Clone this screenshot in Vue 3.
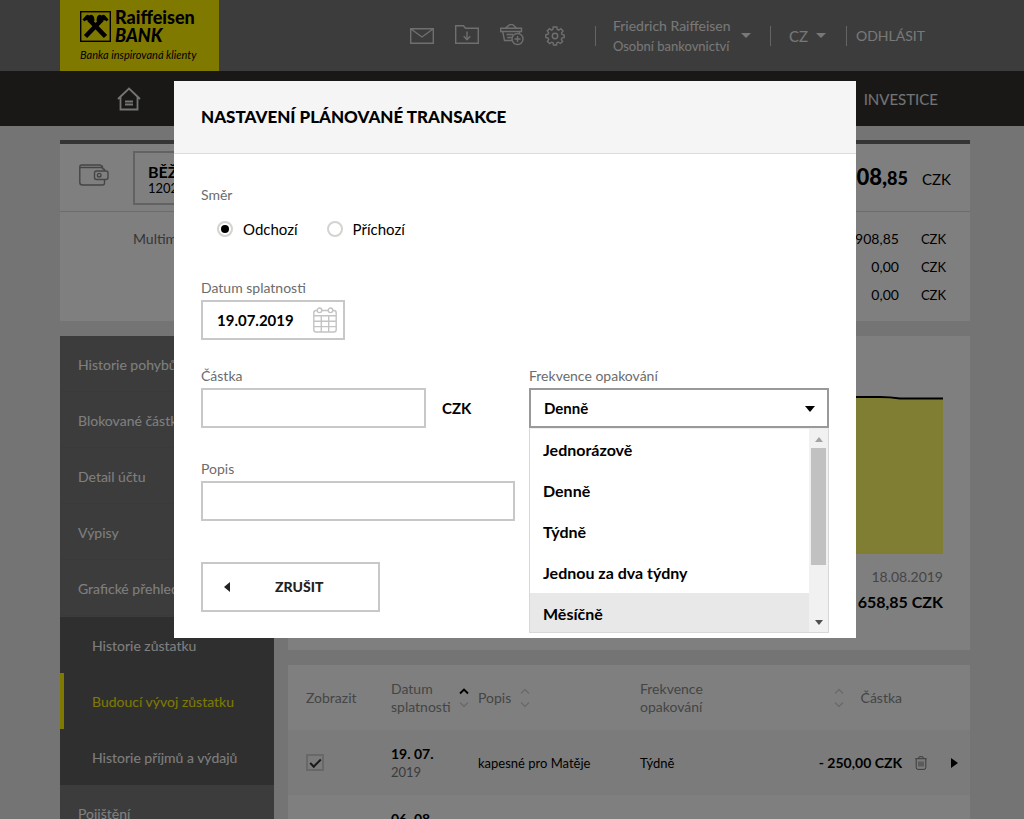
<script setup>
import { ref } from 'vue'

const menu = ['Historie pohybů', 'Blokované částky', 'Detail účtu', 'Výpisy', 'Grafické přehledy']
const submenu = [
  { label: 'Historie zůstatku', active: false },
  { label: 'Budoucí vývoj zůstatku', active: true },
  { label: 'Historie příjmů a výdajů', active: false }
]
const balances = ['908,85', '0,00', '0,00']
const options = ['Jednorázově', 'Denně', 'Týdně', 'Jednou za dva týdny', 'Měsíčně']

const direction = ref('out')
const date = ref('19.07.2019')
const amount = ref('')
const note = ref('')
const frequency = ref('Denně')
const highlighted = ref('Měsíčně')
const shown = ref(true)
</script>

<template>
  <div class="page">
    <header class="topbar">
      <div class="wrap topbar-in">
        <a href="#" class="logo" aria-label="Raiffeisen Bank">
          <span class="logo-row">
            <svg class="logo-mark" viewBox="0 0 31 31" aria-hidden="true">
              <rect x="0.7" y="0.7" width="29.6" height="29.6" fill="none" stroke="#000" stroke-width="1.4" />
              <path d="M5.5 25.5L22 8.5M25.500 25.500L9 8.500" stroke="#000" stroke-width="4.600" />
              <path d="M2.500 8.500L6 4.500Q7.500 2.800 9.200 4.500Q12 2.600 14 6L14.500 9.500L11 12.500L8 9.500Q5.500 8.500 4.500 10.500ZM28.500 8.500L25 4.500Q23.500 2.800 21.800 4.500Q19 2.600 17 6L16.500 9.500L20 12.500L23 9.500Q25.500 8.500 26.500 10.500Z" fill="#000" />
            </svg>
            <span class="logo-name"><span>Raiffeisen</span><i>BANK</i></span>
          </span>
          <span class="logo-claim">Banka inspirovaná klienty</span>
        </a>
        <nav class="tools">
          <a href="#" aria-label="Zprávy">
            <svg width="24" height="24" viewBox="0 0 24 24"><path d="M.7 4.700H23.300V19.300H.7ZM1 5L12 13L23 5" /></svg>
          </a>
          <a href="#" aria-label="Dokumenty">
            <svg width="24" height="24" viewBox="0 0 24 24"><path d="M.7 19.300V1.700H8.500L10.500 4.200H23.300V19.300ZM12 7.500V15.500M8.700 12.300L12 15.700L15.300 12.300" /></svg>
          </a>
          <a href="#" aria-label="Košík">
            <svg width="24" height="24" viewBox="0 0 24 24"><path d="M13 16.500H4.500L2.700 7.500M.7 4.200H21.500V7.500H.7ZM5.500 4L10 .5H12.500L16.500 4M19.800 7.500L19.300 9.500M6.500 10.500H13M7.200 13.500H11.500" /><circle cx="17.500" cy="15" r="5.500" /><path d="M17.500 12V18M14.500 15H20.500" /></svg>
          </a>
          <a href="#" aria-label="Nastavení">
            <svg width="20" height="24" viewBox="0 0 20 24"><circle cx="10" cy="12" r="2.700" /><path d="M8.200 3H11.800L12.300 5.500L13.800 6.100L15.900 4.700L18 7L16.500 9.200L17 10.500L19.200 11V13.500L16.900 14L16.300 15.400L17.600 17.500L15.300 19.500L13.300 18.200L12 18.700L11.500 21H8.500L8 18.700L6.700 18.200L4.700 19.500L2.400 17.400L3.700 15.400L3.100 14L.8 13.500V10.700L3.100 10.200L3.600 8.900L2.300 6.900L4.500 4.700L6.500 6.100L7.800 5.500Z" /></svg>
          </a>
        </nav>
        <button type="button" class="user">
          <span class="user-text">Friedrich Raiffeisen<small>Osobní bankovnictví</small></span>
          <span class="caret"></span>
        </button>
        <button type="button" class="lang">CZ<span class="caret"></span></button>
        <a href="#" class="logout">ODHLÁSIT</a>
      </div>
    </header>

    <nav class="mainnav">
      <div class="wrap mainnav-in">
        <a href="#" aria-label="Domů">
          <svg width="24" height="24" viewBox="0 0 24 24"><path d="M1 12L12 1.500L23 12M3.500 10V22.500H20.500V10M8 14.500H16M8 17.500H16" /></svg>
        </a>
        <a href="#">INVESTICE</a>
      </div>
    </nav>

    <main class="wrap">
      <section class="account">
        <div class="account-head">
          <svg class="wallet" width="30" height="24" viewBox="0 0 30 24"><path d="M25.500 7V5.500L23.500 4.500V2.500L21 1H2.500Q.8 1 .8 3V18.500Q.8 21 3.500 21H23.500Q25.500 21 25.500 19V15.500M.8 3.500H23.500M17.500 7H27Q29 7 29 9V13.500Q29 15.500 27 15.500H17.500Q15.500 15.500 15.500 13.500V9Q15.500 7 17.500 7Z" /><circle cx="20.200" cy="11.200" r="1.800" /></svg>
          <button type="button" class="account-pick"><b>BĚŽNÝ ÚČET</b>1202</button>
          <p class="total"><b>908,<small>85</small></b><span>CZK</span></p>
        </div>
        <div class="account-body">
          <span class="account-note">Multiměnový účet</span>
          <dl class="balances">
            <div v-for="(b, i) in balances" :key="i"><dt>{{ b }}</dt><dd>CZK</dd></div>
          </dl>
        </div>
      </section>

      <div class="columns">
        <nav class="side">
          <a v-for="m in menu" :key="m" href="#">{{ m }}</a>
          <div class="sub">
            <a v-for="s in submenu" :key="s.label" href="#" :class="{ active: s.active }">{{ s.label }}</a>
          </div>
          <a href="#">Pojištění</a>
        </nav>

        <div class="content">
          <section class="chart">
            <svg viewBox="0 0 628 160" preserveAspectRatio="none" aria-hidden="true">
              <path d="M0 2H570L585 3.500H628V160H0Z" fill="#fffc66" />
              <path d="M0 2H565Q575 2 585 3.500H628" fill="none" stroke="#000" stroke-width="2" />
            </svg>
            <p class="chart-date">18.08.2019</p>
            <p class="chart-sum">658,85 CZK</p>
          </section>

          <table class="plan">
            <colgroup>
              <col class="c-show" /><col class="c-date" /><col class="c-note" /><col /><col class="c-sum" /><col class="c-act" />
            </colgroup>
            <thead>
              <tr>
                <th scope="col">Zobrazit</th>
                <th scope="col">
                  <span class="sortable">Datum splatnosti
                    <svg class="sort" width="10" height="20" viewBox="0 0 10 20"><path class="on" d="M1 5.500L5 1.500L9 5.500" /><path d="M1 14.500L5 18.500L9 14.500" /></svg>
                  </span>
                </th>
                <th scope="col">
                  <span class="sortable start">Popis
                    <svg class="sort" width="10" height="20" viewBox="0 0 10 20"><path d="M1 5.500L5 1.500L9 5.500M1 14.500L5 18.500L9 14.500" /></svg>
                  </span>
                </th>
                <th scope="col">Frekvence<br />opakování</th>
                <th scope="col">
                  <span class="sortable end">
                    <svg class="sort" width="10" height="20" viewBox="0 0 10 20"><path d="M1 5.500L5 1.500L9 5.500M1 14.500L5 18.500L9 14.500" /></svg>
                    Částka
                  </span>
                </th>
                <td></td>
              </tr>
            </thead>
            <tbody>
              <tr class="alt">
                <td><input v-model="shown" type="checkbox" class="tick" aria-label="Zobrazit" /></td>
                <td><b>19. 07.</b><small>2019</small></td>
                <td>kapesné pro Matěje</td>
                <td>Týdně</td>
                <td class="num">- 250,00 CZK</td>
                <td>
                  <span class="actions">
                    <button type="button" aria-label="Smazat">
                      <svg width="12" height="14" viewBox="0 0 12 14"><path d="M.3 2.700H11.700M3.500 2.500L4.200 .7H7.800L8.500 2.500M1.200 2.700V11.500Q1.200 13.400 3 13.400H9Q10.800 13.400 10.800 11.500V2.700M4 5.500V10.500M6 5.500V10.500M8 5.500V10.500" /></svg>
                    </button>
                    <button type="button" aria-label="Detail"><span class="tri-right"></span></button>
                  </span>
                </td>
              </tr>
              <tr>
                <td></td>
                <td><b>06. 08.</b><small>2019</small></td>
                <td></td>
                <td></td>
                <td></td>
                <td></td>
              </tr>
            </tbody>
          </table>
        </div>
      </div>
    </main>

    <div class="overlay">
      <form class="modal" role="dialog" aria-labelledby="dlg-title" @submit.prevent>
        <header class="modal-head"><h1 id="dlg-title">NASTAVENÍ PLÁNOVANÉ TRANSAKCE</h1></header>
        <div class="modal-body">
          <fieldset class="direction">
            <legend>Směr</legend>
            <div class="radios">
              <label><input v-model="direction" type="radio" name="direction" value="out" />Odchozí</label>
              <label><input v-model="direction" type="radio" name="direction" value="in" />Příchozí</label>
            </div>
          </fieldset>

          <div class="field date">
            <label for="due">Datum splatnosti</label>
            <div class="date-box">
              <input id="due" v-model="date" type="text" />
              <svg width="24" height="26" viewBox="0 0 24 26" aria-hidden="true"><path d="M4.500 3.500H3Q.8 3.500 .8 6V22.500Q.8 25 3 25H21Q23.200 25 23.200 22.500V6Q23.200 3.500 21 3.500H19.500M8.500 3.500H15.500M.8 8.800H23.200M.8 14.200H23.200M.8 19.600H23.200M8.300 8.800V25M15.700 8.800V25" /><circle cx="6.500" cy="3.300" r="2.300" /><circle cx="17.500" cy="3.300" r="2.300" /></svg>
            </div>
          </div>

          <div class="pair">
            <div class="field">
              <label for="amount">Částka</label>
              <div class="amount-row"><input id="amount" v-model="amount" type="text" /><b>CZK</b></div>
            </div>
            <div class="field freq">
              <label for="freq">Frekvence opakování</label>
              <select id="freq" v-model="frequency">
                <option v-for="o in options" :key="o">{{ o }}</option>
              </select>
              <span class="freq-caret"></span>
              <div class="drop">
                <ul role="listbox" aria-label="Frekvence opakování">
                  <li v-for="o in options" :key="o" role="option" :aria-selected="o === frequency" :class="{ hover: o === highlighted }" @mouseenter="highlighted = o" @click="frequency = o">{{ o }}</li>
                </ul>
                <div class="bar" aria-hidden="true"><i class="up"></i><i class="thumb"></i><i class="down"></i></div>
              </div>
            </div>
          </div>

          <div class="field note">
            <label for="note">Popis</label>
            <input id="note" v-model="note" type="text" />
          </div>

          <button type="button" class="cancel"><span class="tri-left"></span>ZRUŠIT</button>
        </div>
      </form>
    </div>
  </div>
</template>

<style>
body {
  margin: 0;
  background: #e8e8e8;
}
</style>

<style scoped>
* {
  box-sizing: border-box;
}
.page {
  position: relative;
  height: 100vh;
  overflow: hidden;
  background: #e8e8e8;
  font-family: Lato, "Liberation Sans", sans-serif;
  font-size: 15px;
  line-height: 20px;
  color: #000;
}
a {
  color: inherit;
  text-decoration: none;
}
button,
input,
select {
  font: inherit;
  color: inherit;
}
button {
  padding: 0;
  border: 0;
  background: none;
}
p,
h1,
dl,
dd,
ul {
  margin: 0;
  padding: 0;
}
svg {
  display: block;
  flex: none;
  fill: none;
  stroke: currentColor;
  stroke-width: 1.4;
}
.wrap {
  margin: 0 54px 0 60px;
}
.topbar {
  background: #787878;
  color: #f0f0f0;
}
.topbar-in {
  display: flex;
  align-items: center;
  height: 71px;
  padding-right: 45px;
}
.logo {
  align-self: stretch;
  width: 159px;
  padding: 8px 0 0 20px;
  background: #fff200;
  color: #000;
}
.logo-row {
  display: flex;
  align-items: center;
  gap: 4px;
}
.logo-mark {
  width: 31px;
  height: 31px;
  stroke: none;
}
.logo-name {
  font-size: 18px;
  line-height: 18px;
  font-weight: 900;
}
.logo-name > * {
  display: block;
}
.logo-claim {
  display: block;
  font-size: 11px;
  line-height: 14px;
  margin-top: 4px;
  font-style: italic;
  white-space: nowrap;
}
.tools {
  display: flex;
  gap: 21px;
  margin-left: auto;
  color: #dedede;
}
.caret {
  border: 5px solid transparent;
  border-top-color: currentColor;
  border-bottom: 0;
}
.user {
  display: flex;
  align-items: center;
  gap: 8px;
  margin-left: 30px;
  padding-left: 18px;
  text-align: left;
  white-space: nowrap;
  position: relative;
}
.user-text {
  width: 120px;
  font-size: 14px;
}
.user-text small {
  display: block;
  font-size: 13px;
}
.lang {
  display: flex;
  align-items: center;
  gap: 8px;
  margin-left: 19px;
  padding: 0 20px 0 18px;
  border: 1px solid #c8c8c8;
  border-width: 0 1px;
}
.user::before {
  content: "";
  position: absolute;
  left: 0;
  top: 10px;
  height: 20px;
  border-left: 1px solid #c8c8c8;
}
.logout {
  padding-left: 9px;
  font-size: 14px;
}
.mainnav {
  background: #33312f;
  color: #e8e8e8;
}
.mainnav-in {
  display: flex;
  justify-content: space-between;
  align-items: center;
  height: 55px;
  padding: 0 32px 0 57px;
}
.mainnav svg {
  stroke-width: 1.8;
}
.account {
  margin-top: 14px;
  border-top: 4px solid #6a6a6a;
  background: #fff;
}
.account-head {
  display: flex;
  align-items: center;
  height: 68px;
  padding: 0 19px;
  border-bottom: 1px solid #d8d8d8;
}
.wallet {
  color: #8a8a8a;
  margin-top: -4px;
}
.account-pick {
  width: 300px;
  height: 54px;
  margin-left: 24px;
  padding: 5px 0 0 13px;
  border: 2px solid #c4c4c4;
  text-align: left;
  font-size: 13px;
  line-height: 16px;
}
.account-pick b {
  display: block;
  font-size: 16px;
}
.total {
  display: flex;
  align-items: baseline;
  gap: 14px;
  margin-left: auto;
}
.total b {
  font-size: 22px;
  font-weight: 900;
}
.total small {
  font-size: 18px;
}
.account-body {
  display: flex;
  justify-content: space-between;
  height: 109px;
  padding: 13px 24px 0 73px;
  font-size: 14px;
}
.account-note {
  line-height: 28px;
  color: #6c6c6c;
}
.balances div {
  display: flex;
  gap: 22px;
  justify-content: flex-end;
  line-height: 28px;
}
.balances dd {
  font-size: 13px;
}
.columns {
  display: flex;
  align-items: flex-start;
  gap: 14px;
  margin-top: 15px;
}
.side {
  flex: none;
  width: 214px;
  background: #787878;
  color: #fff;
  font-size: 14px;
}
.side a {
  display: block;
  height: 56px;
  padding-left: 18px;
  line-height: 57px;
  border-bottom: 1px solid #747474;
}
.sub {
  margin-top: 1px;
  background: #5e5e5e;
}
.sub a {
  padding-left: 28px;
  border: 0;
  border-left: 4px solid transparent;
}
.sub a.active {
  border-color: #fff200;
  color: #fff200;
}
.content {
  flex: 1;
  min-width: 0;
}
.chart {
  height: 314px;
  padding: 59px 27px 0;
  background: #fff;
  text-align: right;
}
.chart svg {
  width: 100%;
  height: 159px;
  stroke: none;
}
.chart-date {
  margin-top: 13px;
  font-size: 14px;
  color: #8a8a8a;
}
.chart-sum {
  margin-top: 5px;
  font-size: 16px;
  font-weight: 700;
}
.plan {
  width: 100%;
  margin-top: 15px;
  table-layout: fixed;
  border-collapse: collapse;
  background: #fff;
  font-size: 13px;
  line-height: 18px;
}
.c-show { width: 103px; }
.c-date { width: 87px; }
.c-note { width: 162px; }
.c-sum { width: 100px; }
.c-act { width: 68px; }
.plan th,
.plan td {
  height: 65px;
  padding: 0;
  text-align: left;
  vertical-align: middle;
}
.plan th {
  font-weight: 400;
  font-size: 14px;
  color: #8a8a8a;
}
.plan th:first-child,
.plan td:first-child {
  padding-left: 18px;
}
.plan small {
  display: block;
  font-size: 13px;
  color: #777;
}
.plan b {
  font-size: 14px;
}
.plan .alt {
  background: #f6f6f6;
}
.plan .num {
  font-weight: 700;
  font-size: 14px;
  text-align: right;
  white-space: nowrap;
}
.sortable {
  display: flex;
  align-items: center;
  justify-content: space-between;
  padding-right: 9px;
}
.sortable.start {
  justify-content: flex-start;
  gap: 9px;
}
.sortable.end {
  justify-content: flex-end;
  gap: 17px;
  padding: 0;
}
.sort {
  color: #d4d4d4;
}
.sort .on {
  stroke: #000;
  stroke-width: 1.8;
}
.tick {
  appearance: none;
  display: grid;
  place-items: center;
  width: 18px;
  height: 17px;
  margin: 0;
  border: 2px solid #d0d0d0;
}
.tick:checked::after {
  content: "";
  width: 9px;
  height: 4px;
  border: solid #333;
  border-width: 0 0 2px 2px;
  transform: translateY(-1px) rotate(-45deg);
}
.actions {
  display: flex;
  align-items: center;
  justify-content: space-between;
  padding: 0 12px 0 13px;
}
.actions svg {
  color: #777;
  stroke-width: 1;
}
.tri-right,
.tri-left {
  display: block;
  border: 5px solid transparent;
}
.tri-right {
  border-left: 7px solid #000;
  border-right: 0;
}
.tri-left {
  border-right: 6px solid #222;
  border-left: 0;
}
.overlay {
  position: absolute;
  inset: 0;
  padding: 81px 168px 0 174px;
  background: rgba(0, 0, 0, 0.5);
}
.modal {
  background: #fff;
}
.modal-head {
  display: flex;
  align-items: center;
  height: 73px;
  padding: 0 27px;
  border-bottom: 1px solid #dcdcdc;
  background: #f5f5f5;
}
.modal-head h1 {
  font-size: 17px;
  line-height: 20px;
  font-weight: 900;
}
.modal-body {
  padding: 31px 27px 26px;
}
.direction {
  margin: 0;
  padding: 0;
  border: 0;
}
legend {
  padding: 0;
}
legend,
.field label {
  font-size: 14px;
  color: #6c6c6c;
}
.radios {
  display: flex;
  gap: 29px;
  margin-top: 14px;
  padding-left: 16px;
}
.radios label {
  display: flex;
  align-items: center;
  gap: 10px;
}
.radios input {
  appearance: none;
  display: grid;
  place-items: center;
  width: 16px;
  height: 16px;
  margin: 0;
  border: 2px solid #d5d3cf;
  border-radius: 50%;
}
.radios input:checked::after {
  content: "";
  width: 8px;
  height: 8px;
  border-radius: 50%;
  background: #000;
}
.field label {
  display: block;
  margin-bottom: 2px;
}
.field input,
.field select {
  appearance: none;
  display: block;
  width: 100%;
  height: 40px;
  padding: 0 14px;
  border: 2px solid #c8c8c8;
  border-radius: 0;
  outline: 0;
  background: #fff;
  font-weight: 700;
}
.date {
  width: 144px;
  margin-top: 39px;
}
.date-box {
  display: flex;
  align-items: center;
  padding-right: 6px;
  height: 40px;
  border: 2px solid #c8c8c8;
  color: #c4c4c4;
}
.date-box input {
  flex: 1;
  min-width: 0;
  height: 36px;
  padding-right: 0;
  border: 0;
  color: #000;
}
.pair {
  display: grid;
  grid-template-columns: 1fr 300px;
  gap: 14px;
  margin-top: 26px;
}
.amount-row {
  display: flex;
  align-items: center;
  gap: 16px;
}
.amount-row input {
  width: 225px;
}
.freq {
  position: relative;
}
.field select {
  border-color: #999;
  padding: 0 13px;
}
.freq-caret {
  position: absolute;
  right: 14px;
  top: 40px;
  border: 5px solid transparent;
  border-top: 6px solid #000;
  border-bottom: 0;
}
.drop {
  position: absolute;
  top: 62px;
  left: 0;
  right: 0;
  display: flex;
  height: 205px;
  border: 1px solid #d8d8d8;
  border-top-color: #eee;
  background: #fff;
}
.drop ul {
  flex: 1;
  overflow: hidden;
  list-style: none;
}
.drop li {
  height: 41px;
  padding-left: 13px;
  line-height: 41px;
  font-size: 16px;
  font-weight: 700;
}
.drop li.hover {
  background: #e8e8e8;
}
.bar {
  display: flex;
  flex-direction: column;
  align-items: center;
  width: 19px;
  padding: 8px 0 7px;
  background: #f1f1f1;
}
.bar .up,
.bar .down {
  border: 4px solid transparent;
}
.bar .up {
  border-bottom: 5px solid #a3a3a3;
  border-top: 0;
}
.bar .down {
  margin-top: auto;
  border-top: 5px solid #505050;
  border-bottom: 0;
}
.bar .thumb {
  width: 15px;
  height: 117px;
  margin-top: 6px;
  background: #c1c1c1;
}
.note {
  width: 314px;
  margin-top: 31px;
}
.cancel {
  display: flex;
  align-items: center;
  gap: 45px;
  width: 179px;
  height: 50px;
  margin-top: 41px;
  padding-left: 21px;
  border: 2px solid #c8c8c8;
  color: #222;
  font-size: 14px;
  font-weight: 900;
}
</style>
